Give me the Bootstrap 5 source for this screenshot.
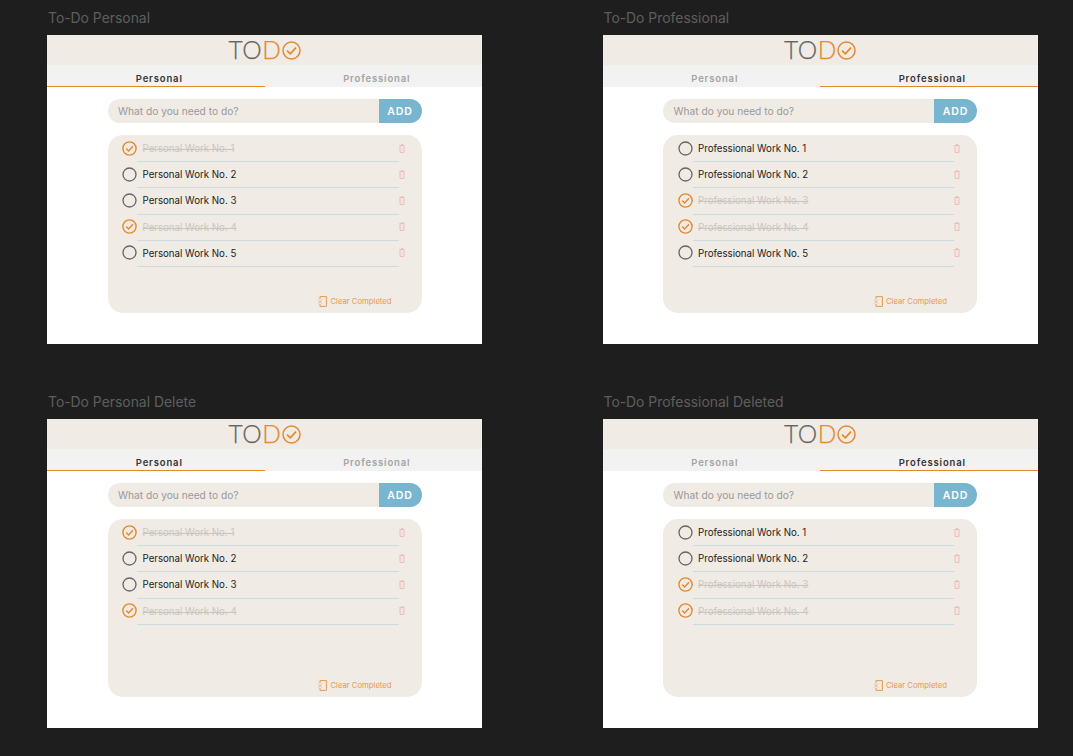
<!DOCTYPE html>
<html lang="en"><head><meta charset="utf-8"><title>To-Do</title>
<link href="https://cdn.jsdelivr.net/npm/bootstrap@5.3.0/dist/css/bootstrap.min.css" rel="stylesheet">
<style>
html,body{margin:0;height:756px;overflow:hidden}
body{background:#1e1e1e;font-family:Inter,"Liberation Sans",sans-serif}
.board{display:grid;grid-template-columns:435px 435px;column-gap:120.5px;row-gap:50px;padding:10px 0 0 47px}
.frame-label{height:25px;line-height:17px;font-size:13.9px;color:#5e5e5e;padding-left:1px;margin:0;font-weight:400}
.frame{background:#fff;height:309px}
.app-head{height:30px;background:#f0ebe5;font-family:Lato,sans-serif;font-weight:300;font-size:24.5px;line-height:30px;letter-spacing:.6px;color:#666;-webkit-text-stroke:.25px currentColor}
.app-head .d-letter{color:#e38a2e}
.app-head svg{width:19px;height:19px;margin-left:0;margin-top:1px}
.tabs-bar{height:22px;background:#f2f2f2}
.tab-item{flex:1 1 50%;text-align:center;font-size:9.5px;font-weight:600;letter-spacing:.85px;color:#a3a3a3;line-height:27px;height:22px;padding-left:7px}
.tab-item.on{color:#333;border-bottom:1.7px solid #e38a2e}
.add-form{width:314px;height:24px;margin:12px auto 12px}
.add-input{flex:1;background:#f0ebe5;border-radius:12px 0 0 12px;font-size:10.2px;line-height:25px;padding-left:10.5px;color:#999}
.add-btn{width:43px;background:#78b6d0;color:#fff;border:0;border-radius:0 12px 12px 0;font-size:10.5px;font-weight:600;letter-spacing:.9px;padding:0;line-height:26px}
.todo-box{width:314px;height:178px;margin:0 auto;background:#f0ebe5;border-radius:15px;padding:1px 0 0 14.5px;position:relative}
.todo-row{height:26.2px}
.todo-row>svg.chk{width:15px;height:15px;margin-top:-2px;flex:none}
.todo-txt{width:261.5px;height:26.2px;line-height:25px;border-bottom:1px solid #c9dbdf;padding-left:5.5px;font-size:9.7px;color:#222}
.done .todo-txt{color:#c9c5c0;text-decoration:line-through}
.trash{width:6px;height:9px;flex:none;margin:-2px 0 0 0}
.clear-link{position:absolute;right:30px;bottom:6px;font-size:7.7px;color:#e59a50;line-height:11px}
.clear-link svg{width:9px;height:11px;margin-right:-1px}
</style></head><body>
<svg width="0" height="0" class="position-absolute">
<symbol id="on" viewBox="0 0 15 15"><circle cx="7.5" cy="7.5" r="6.6" fill="none" stroke="#e38a2e" stroke-width="1.4"/><path d="M4.2 7.6 6.6 10 11 5.2" fill="none" stroke="#e38a2e" stroke-width="1.4"/></symbol>
<symbol id="off" viewBox="0 0 15 15"><circle cx="7.5" cy="7.5" r="6.5" fill="none" stroke="#666" stroke-width="1.3"/></symbol>
<symbol id="bin" viewBox="0 0 6 9"><path d="M.5 1.5h5M2 .5h2M1 1.5v7h4v-7" fill="#f6e4e0" stroke="#e8bcb5" stroke-width=".9"/></symbol>
<symbol id="logo" viewBox="0 0 19 19"><circle cx="9.5" cy="9.5" r="8.5" fill="none" stroke="#e38a2e" stroke-width="1.5"/><path d="M5 9.7 8.3 12.8 14 6.6" fill="none" stroke="#e38a2e" stroke-width="1.7"/></symbol>
<symbol id="clr" viewBox="0 0 9 11"><path d="M2 3V.6h6.4v9.8H2V8" fill="none" stroke="#e59a50" stroke-width="1"/><path d="M.4 3.6 4 7.6M4 3.6.4 7.6" fill="none" stroke="#e59a50" stroke-width=".6"/></symbol>
</svg>
<main class="board">

<section>
<h2 class="frame-label">To-Do Personal</h2>
<div class="frame">
<div class="app-head d-flex justify-content-center"><span>TO<span class="d-letter">D</span></span><svg class="align-self-center"><use href="#logo"/></svg></div>
<div class="tabs-bar d-flex"><div class="tab-item on">Personal</div><div class="tab-item">Professional</div></div>
<div class="add-form d-flex"><div class="add-input">What do you need to do?</div><button class="add-btn">ADD</button></div>
<div class="todo-box">
<div class="todo-row d-flex align-items-center done"><svg class="chk"><use href="#on"/></svg><div class="todo-txt">Personal Work No. 1</div><svg class="trash"><use href="#bin"/></svg></div>
<div class="todo-row d-flex align-items-center"><svg class="chk"><use href="#off"/></svg><div class="todo-txt">Personal Work No. 2</div><svg class="trash"><use href="#bin"/></svg></div>
<div class="todo-row d-flex align-items-center"><svg class="chk"><use href="#off"/></svg><div class="todo-txt">Personal Work No. 3</div><svg class="trash"><use href="#bin"/></svg></div>
<div class="todo-row d-flex align-items-center done"><svg class="chk"><use href="#on"/></svg><div class="todo-txt">Personal Work No. 4</div><svg class="trash"><use href="#bin"/></svg></div>
<div class="todo-row d-flex align-items-center"><svg class="chk"><use href="#off"/></svg><div class="todo-txt">Personal Work No. 5</div><svg class="trash"><use href="#bin"/></svg></div>
<div class="clear-link d-flex align-items-center gap-1"><svg><use href="#clr"/></svg>Clear Completed</div>
</div></div>
</section>

<section>
<h2 class="frame-label">To-Do Professional</h2>
<div class="frame">
<div class="app-head d-flex justify-content-center"><span>TO<span class="d-letter">D</span></span><svg class="align-self-center"><use href="#logo"/></svg></div>
<div class="tabs-bar d-flex"><div class="tab-item">Personal</div><div class="tab-item on">Professional</div></div>
<div class="add-form d-flex"><div class="add-input">What do you need to do?</div><button class="add-btn">ADD</button></div>
<div class="todo-box">
<div class="todo-row d-flex align-items-center"><svg class="chk"><use href="#off"/></svg><div class="todo-txt">Professional Work No. 1</div><svg class="trash"><use href="#bin"/></svg></div>
<div class="todo-row d-flex align-items-center"><svg class="chk"><use href="#off"/></svg><div class="todo-txt">Professional Work No. 2</div><svg class="trash"><use href="#bin"/></svg></div>
<div class="todo-row d-flex align-items-center done"><svg class="chk"><use href="#on"/></svg><div class="todo-txt">Professional Work No. 3</div><svg class="trash"><use href="#bin"/></svg></div>
<div class="todo-row d-flex align-items-center done"><svg class="chk"><use href="#on"/></svg><div class="todo-txt">Professional Work No. 4</div><svg class="trash"><use href="#bin"/></svg></div>
<div class="todo-row d-flex align-items-center"><svg class="chk"><use href="#off"/></svg><div class="todo-txt">Professional Work No. 5</div><svg class="trash"><use href="#bin"/></svg></div>
<div class="clear-link d-flex align-items-center gap-1"><svg><use href="#clr"/></svg>Clear Completed</div>
</div></div>
</section>

<section>
<h2 class="frame-label">To-Do Personal Delete</h2>
<div class="frame">
<div class="app-head d-flex justify-content-center"><span>TO<span class="d-letter">D</span></span><svg class="align-self-center"><use href="#logo"/></svg></div>
<div class="tabs-bar d-flex"><div class="tab-item on">Personal</div><div class="tab-item">Professional</div></div>
<div class="add-form d-flex"><div class="add-input">What do you need to do?</div><button class="add-btn">ADD</button></div>
<div class="todo-box">
<div class="todo-row d-flex align-items-center done"><svg class="chk"><use href="#on"/></svg><div class="todo-txt">Personal Work No. 1</div><svg class="trash"><use href="#bin"/></svg></div>
<div class="todo-row d-flex align-items-center"><svg class="chk"><use href="#off"/></svg><div class="todo-txt">Personal Work No. 2</div><svg class="trash"><use href="#bin"/></svg></div>
<div class="todo-row d-flex align-items-center"><svg class="chk"><use href="#off"/></svg><div class="todo-txt">Personal Work No. 3</div><svg class="trash"><use href="#bin"/></svg></div>
<div class="todo-row d-flex align-items-center done"><svg class="chk"><use href="#on"/></svg><div class="todo-txt">Personal Work No. 4</div><svg class="trash"><use href="#bin"/></svg></div>
<div class="clear-link d-flex align-items-center gap-1"><svg><use href="#clr"/></svg>Clear Completed</div>
</div></div>
</section>

<section>
<h2 class="frame-label">To-Do Professional Deleted</h2>
<div class="frame">
<div class="app-head d-flex justify-content-center"><span>TO<span class="d-letter">D</span></span><svg class="align-self-center"><use href="#logo"/></svg></div>
<div class="tabs-bar d-flex"><div class="tab-item">Personal</div><div class="tab-item on">Professional</div></div>
<div class="add-form d-flex"><div class="add-input">What do you need to do?</div><button class="add-btn">ADD</button></div>
<div class="todo-box">
<div class="todo-row d-flex align-items-center"><svg class="chk"><use href="#off"/></svg><div class="todo-txt">Professional Work No. 1</div><svg class="trash"><use href="#bin"/></svg></div>
<div class="todo-row d-flex align-items-center"><svg class="chk"><use href="#off"/></svg><div class="todo-txt">Professional Work No. 2</div><svg class="trash"><use href="#bin"/></svg></div>
<div class="todo-row d-flex align-items-center done"><svg class="chk"><use href="#on"/></svg><div class="todo-txt">Professional Work No. 3</div><svg class="trash"><use href="#bin"/></svg></div>
<div class="todo-row d-flex align-items-center done"><svg class="chk"><use href="#on"/></svg><div class="todo-txt">Professional Work No. 4</div><svg class="trash"><use href="#bin"/></svg></div>
<div class="clear-link d-flex align-items-center gap-1"><svg><use href="#clr"/></svg>Clear Completed</div>
</div></div>
</section>

</main>
<script src="https://cdn.jsdelivr.net/npm/bootstrap@5.3.0/dist/js/bootstrap.bundle.min.js"></script>
</body></html>
